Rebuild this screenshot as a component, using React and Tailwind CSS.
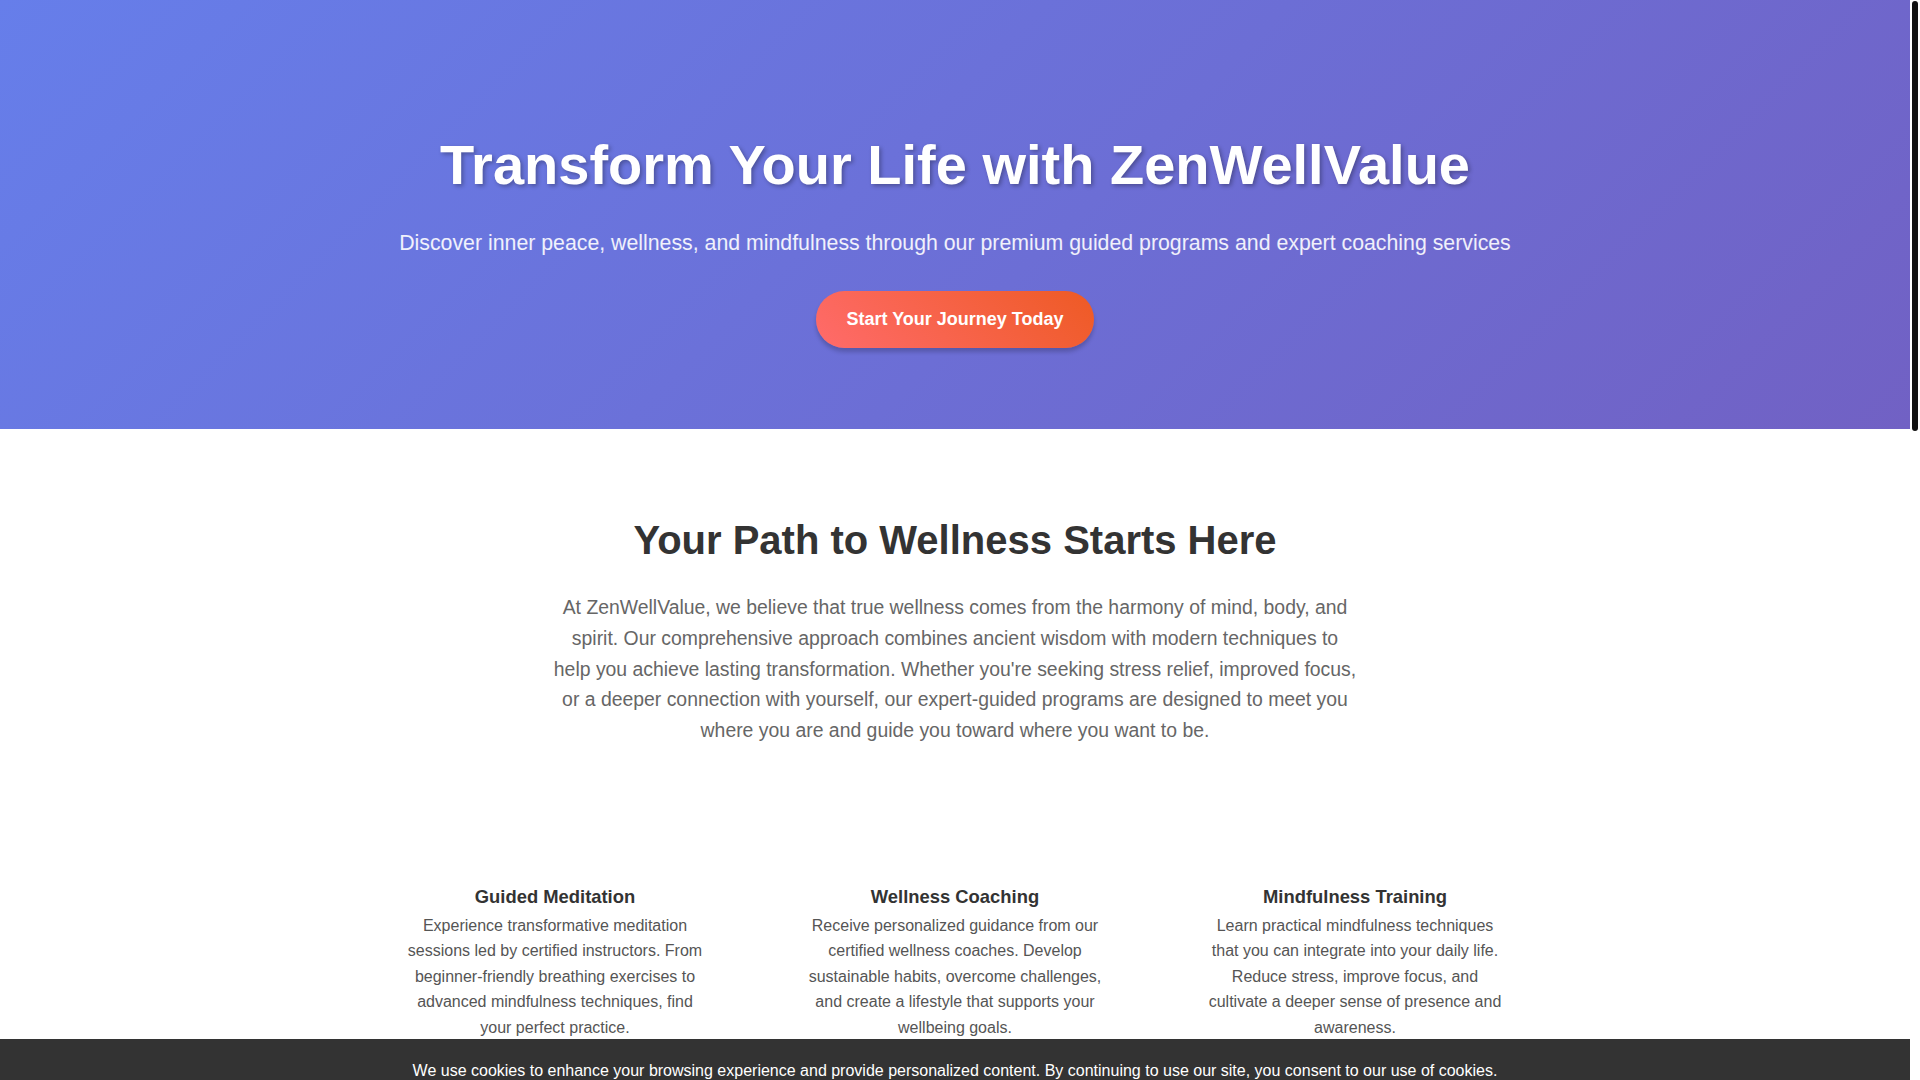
import React from "react";

const features = [
  {
    title: "Guided Meditation",
    text: "Experience transformative meditation sessions led by certified instructors. From beginner-friendly breathing exercises to advanced mindfulness techniques, find your perfect practice.",
  },
  {
    title: "Wellness Coaching",
    text: "Receive personalized guidance from our certified wellness coaches. Develop sustainable habits, overcome challenges, and create a lifestyle that supports your wellbeing goals.",
  },
  {
    title: "Mindfulness Training",
    text: "Learn practical mindfulness techniques that you can integrate into your daily life. Reduce stress, improve focus, and cultivate a deeper sense of presence and awareness.",
  },
];

const testimonials = [
  {
    quote:
      "ZenWellValue changed the way I handle stress. The guided sessions fit into my busy mornings and I finally feel grounded.",
    name: "Sarah M.",
  },
  {
    quote:
      "My coach helped me build habits that actually stuck. Six months in, I sleep better and feel calmer every day.",
    name: "David R.",
  },
  {
    quote:
      "The mindfulness training is practical and kind. I use the breathing techniques at work all the time.",
    name: "Emily T.",
  },
];

export default function App() {
  return (
    <div className="bg-white font-['Liberation_Sans',Arial,sans-serif] text-[#333]">
      <div className="mr-[10px]">
        {/* Hero */}
        <header className="bg-[linear-gradient(135deg,#667eea_0%,#7161c4_100%)] px-4 pt-[131px] pb-[81px] text-center text-white">
          <h1 className="text-[56px] font-bold leading-[1.2] [text-shadow:2px_2px_4px_rgba(0,0,0,0.3)]">
            Transform Your Life with ZenWellValue
          </h1>
          <p className="mt-[29px] text-[21.3px] leading-[1.55] text-white/90">
            Discover inner peace, wellness, and mindfulness through our premium guided programs and expert coaching services
          </p>
          <button className="mt-[31px] rounded-full bg-[linear-gradient(45deg,#ff6b6b,#ee5a24)] px-[30px] py-[15px] text-[18px] font-bold leading-[27px] text-white shadow-[0_4px_4px_rgba(0,0,0,0.2)]">
            Start Your Journey Today
          </button>
        </header>

        {/* Intro */}
        <section className="px-4 pt-[87px] text-center">
          <h2 className="text-[40px] font-bold leading-[1.2] text-[#333]">
            Your Path to Wellness Starts Here
          </h2>
          <p className="mx-auto mt-[28px] max-w-[804px] text-[19.4px] leading-[30.7px] text-[#666]">
            At ZenWellValue, we believe that true wellness comes from the harmony of mind, body, and spirit. Our comprehensive approach combines ancient wisdom with modern techniques to help you achieve lasting transformation. Whether you're seeking stress relief, improved focus, or a deeper connection with yourself, our expert-guided programs are designed to meet you where you are and guide you toward where you want to be.
          </p>
        </section>

        {/* Features */}
        <section className="mx-auto max-w-[1200px] px-4 pt-[106px]">
          <div className="grid grid-cols-3 gap-8">
            {features.map((f) => (
              <div key={f.title} className="px-8 pt-[33px] pb-8 text-center">
                <h3 className="mb-[5px] text-[18.4px] font-bold leading-[23px] text-[#333]">{f.title}</h3>
                <p className="text-[16px] leading-[1.6] text-[#555]">{f.text}</p>
              </div>
            ))}
          </div>
        </section>

        {/* Testimonials */}
        <section className="mt-[80px] bg-[#f8f9fa] px-4 py-[80px]">
          <h2 className="text-center text-[40px] font-bold leading-[1.2] text-[#333]">What Our Members Say</h2>
          <div className="mx-auto mt-12 grid max-w-[1200px] grid-cols-3 gap-8">
            {testimonials.map((t) => (
              <div key={t.name} className="rounded-2xl bg-white p-8 shadow-[0_5px_20px_rgba(0,0,0,0.08)]">
                <p className="text-[16px] leading-[1.7] italic text-[#555]">"{t.quote}"</p>
                <p className="mt-4 font-bold text-[#667eea]">— {t.name}</p>
              </div>
            ))}
          </div>
        </section>

        {/* Call to action */}
        <section className="px-4 py-[100px] text-center">
          <h2 className="text-[40px] font-bold leading-[1.2] text-[#333]">Ready to Begin?</h2>
          <p className="mx-auto mt-6 max-w-[700px] text-[18px] leading-[1.7] text-[#666]">
            Join thousands of members who have found balance, clarity and calm with ZenWellValue. Your first session is on us.
          </p>
          <button className="mt-8 rounded-full bg-[linear-gradient(45deg,#ff6b6b,#ee5a24)] px-[30px] py-[15px] text-[18px] font-bold text-white">
            Get Started
          </button>
        </section>

        {/* Footer */}
        <footer className="bg-[#2c3e50] px-4 pt-[60px] pb-[150px] text-center text-white/80">
          <p className="text-[22px] font-bold text-white">ZenWellValue</p>
          <p className="mt-3 text-[15px]">Mindfulness, meditation and wellness coaching</p>
          <div className="mt-6 flex justify-center gap-8 text-[15px]">
            <span>Privacy Policy</span>
            <span>Terms of Service</span>
            <span>Contact</span>
          </div>
          <p className="mt-8 text-[14px] text-white/60">© 2024 ZenWellValue. All rights reserved.</p>
        </footer>
      </div>

      <div className="fixed right-[10px] bottom-0 left-0 z-10 translate-y-[70px] bg-[#333] px-5 py-5 text-center text-white">
        <p className="text-[16px] leading-[1.5]">
          We use cookies to enhance your browsing experience and provide personalized content. By continuing to use our site, you consent to our use of cookies.
        </p>
        <div className="mt-[10px] flex justify-center gap-3">
          <button className="rounded-[5px] bg-[#667eea] px-5 py-2 text-[14px] text-white">Accept</button>
          <button className="rounded-[5px] bg-[#555] px-5 py-2 text-[14px] text-white">Decline</button>
        </div>
      </div>

      {/* Page scrollbar */}
      <div className="fixed top-0 right-0 z-20 h-screen w-[10px] bg-white px-[2px] pt-[1px]">
        <div className="h-[430px] w-full rounded-[3px] bg-[#111]" />
      </div>
    </div>
  );
}
